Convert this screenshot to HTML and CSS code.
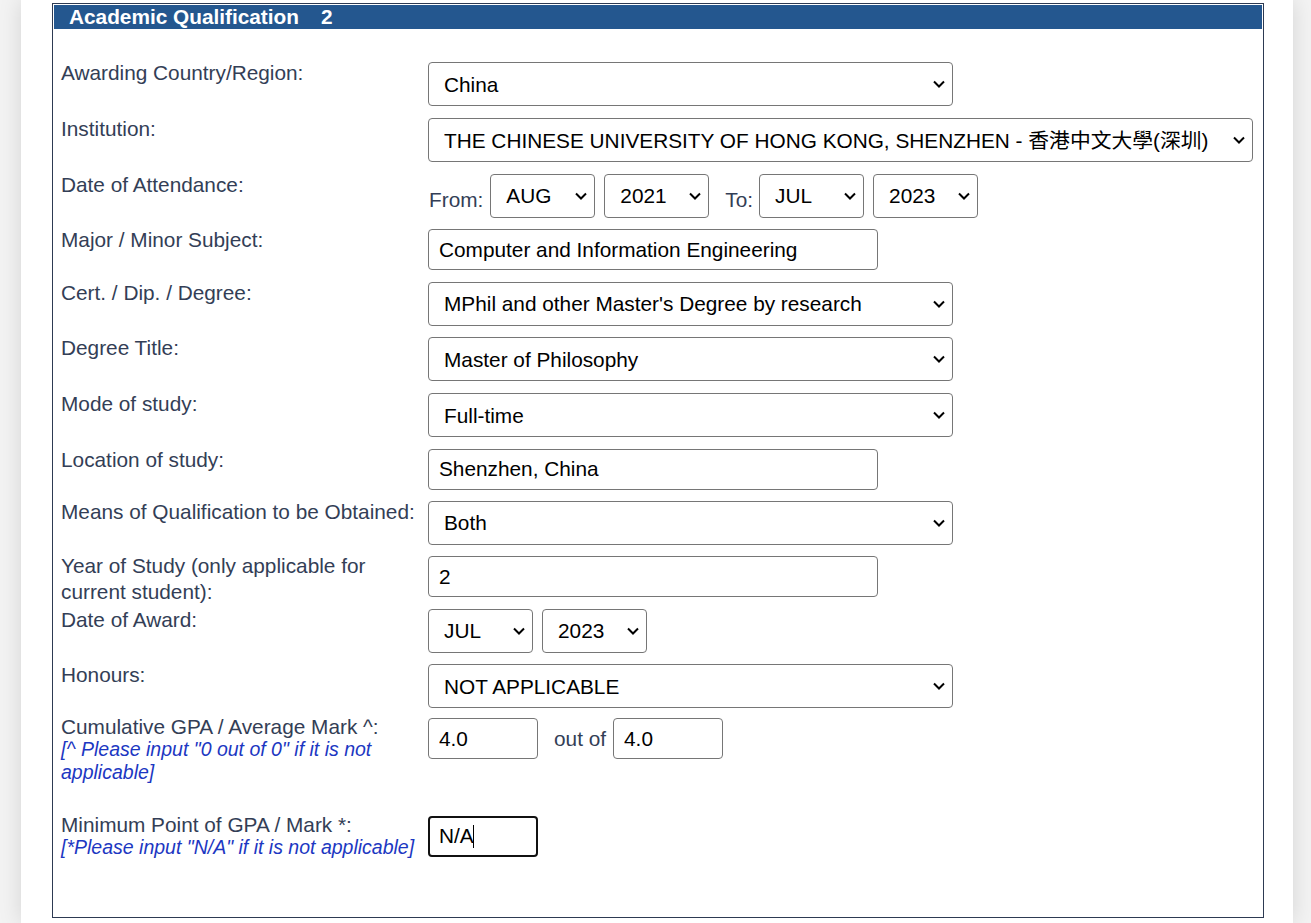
FILE: index.html
```html
<!DOCTYPE html>
<html lang="en">
<head>
<meta charset="utf-8">
<title>Academic Qualification</title>
<link rel="stylesheet" href="styles.css">
</head>
<body>
<div class="page">
  <div class="panel">
    <div class="panel-title">Academic Qualification<span class="num">2</span></div>
    <div class="form">

      <div class="row">
        <div class="label">Awarding Country/Region:</div>
        <div class="field">
          <span class="sel w-md"><select><option>China</option></select><svg class="chev" viewBox="0 0 12 8"><path d="M1 1.5 6 6.5 11 1.5"/></svg></span>
        </div>
      </div>

      <div class="row">
        <div class="label">Institution:</div>
        <div class="field">
          <span class="sel w-xl"><select><option>THE CHINESE UNIVERSITY OF HONG KONG, SHENZHEN - 香港中文大學(深圳)</option></select><svg class="chev" viewBox="0 0 12 8"><path d="M1 1.5 6 6.5 11 1.5"/></svg></span>
        </div>
      </div>

      <div class="row">
        <div class="label">Date of Attendance:</div>
        <div class="field inline">
          <span class="txt from">From:</span>
          <span class="sel w-sm"><select><option>AUG</option></select><svg class="chev" viewBox="0 0 12 8"><path d="M1 1.5 6 6.5 11 1.5"/></svg></span>
          <span class="sel w-sm gap-sel"><select><option>2021</option></select><svg class="chev" viewBox="0 0 12 8"><path d="M1 1.5 6 6.5 11 1.5"/></svg></span>
          <span class="txt to">To:</span>
          <span class="sel w-sm"><select><option>JUL</option></select><svg class="chev" viewBox="0 0 12 8"><path d="M1 1.5 6 6.5 11 1.5"/></svg></span>
          <span class="sel w-sm gap-sel"><select><option>2023</option></select><svg class="chev" viewBox="0 0 12 8"><path d="M1 1.5 6 6.5 11 1.5"/></svg></span>
        </div>
      </div>

      <div class="row short">
        <div class="label">Major / Minor Subject:</div>
        <div class="field">
          <input class="text w-in" type="text" value="Computer and Information Engineering">
        </div>
      </div>

      <div class="row">
        <div class="label">Cert. / Dip. / Degree:</div>
        <div class="field">
          <span class="sel w-md"><select><option>MPhil and other Master's Degree by research</option></select><svg class="chev" viewBox="0 0 12 8"><path d="M1 1.5 6 6.5 11 1.5"/></svg></span>
        </div>
      </div>

      <div class="row">
        <div class="label">Degree Title:</div>
        <div class="field">
          <span class="sel w-md"><select><option>Master of Philosophy</option></select><svg class="chev" viewBox="0 0 12 8"><path d="M1 1.5 6 6.5 11 1.5"/></svg></span>
        </div>
      </div>

      <div class="row">
        <div class="label">Mode of study:</div>
        <div class="field">
          <span class="sel w-md"><select><option>Full-time</option></select><svg class="chev" viewBox="0 0 12 8"><path d="M1 1.5 6 6.5 11 1.5"/></svg></span>
        </div>
      </div>

      <div class="row short">
        <div class="label">Location of study:</div>
        <div class="field">
          <input class="text w-in" type="text" value="Shenzhen, China">
        </div>
      </div>

      <div class="row">
        <div class="label">Means of Qualification to be Obtained:</div>
        <div class="field">
          <span class="sel w-md"><select><option>Both</option></select><svg class="chev" viewBox="0 0 12 8"><path d="M1 1.5 6 6.5 11 1.5"/></svg></span>
        </div>
      </div>

      <div class="row short">
        <div class="label two-line">Year of Study (only applicable for current student):</div>
        <div class="field">
          <input class="text w-in" type="text" value="2">
        </div>
      </div>

      <div class="row">
        <div class="label">Date of Award:</div>
        <div class="field inline">
          <span class="sel w-sm"><select><option>JUL</option></select><svg class="chev" viewBox="0 0 12 8"><path d="M1 1.5 6 6.5 11 1.5"/></svg></span>
          <span class="sel w-sm gap-sel"><select><option>2023</option></select><svg class="chev" viewBox="0 0 12 8"><path d="M1 1.5 6 6.5 11 1.5"/></svg></span>
        </div>
      </div>

      <div class="row">
        <div class="label">Honours:</div>
        <div class="field">
          <span class="sel w-md"><select><option>NOT APPLICABLE</option></select><svg class="chev" viewBox="0 0 12 8"><path d="M1 1.5 6 6.5 11 1.5"/></svg></span>
        </div>
      </div>

      <div class="row short gpa">
        <div class="label with-note">Cumulative GPA / Average Mark ^:<span class="note">[^ Please input "0 out of 0" if it is not applicable]</span></div>
        <div class="field centered">
          <input class="text w-xs" type="text" value="4.0">
          <span class="txt outof">out of</span>
          <input class="text w-xs" type="text" value="4.0">
        </div>
      </div>

      <div class="row short spaced">
        <div class="label with-note">Minimum Point of GPA / Mark *:<span class="note">[*Please input "N/A" if it is not applicable]</span></div>
        <div class="field">
          <span class="focus-wrap"><input class="text w-xs focused" type="text" value="N/A"><span class="caret"></span></span>
        </div>
      </div>

    </div>
  </div>
</div>
</body>
</html>
```

FILE: styles.css
```css
html, body {
  margin: 0;
  padding: 0;
}

body {
  background: #f3f3f3;
  font-family: "Liberation Sans", Arial, "Noto Sans CJK TC", sans-serif;
  font-size: 20.8px;
  color: #333e56;
}

.page {
  box-sizing: border-box;
  width: 1272px;
  min-height: 923px;
  margin-left: 21px;
  padding: 3px 0 0 31px;
  background: #ffffff;
  box-shadow: 0 0 22px rgba(0, 0, 0, 0.13);
}

.panel {
  box-sizing: border-box;
  width: 1212px;
  border: 1px solid #2d3a52;
  padding: 1px;
}

.panel-title {
  height: 24px;
  line-height: 24px;
  padding-left: 15px;
  background: #24578f;
  color: #ffffff;
  font-weight: bold;
  font-size: 20.8px;
}

.panel-title .num {
  margin-left: 22px;
}

.form {
  padding: 27.5px 0 52px 7px;
}

.row {
  display: flex;
  align-items: flex-start;
  padding: 5.875px 0;
}

.row.short {
  padding: 5.5px 0;
}

.row.gpa {
  margin-top: -1.75px;
}

.row.spaced {
  margin-top: 21.5px;
}

.label {
  flex: 0 0 367px;
  line-height: 24px;
  margin-top: -1px;
}

.label.two-line {
  line-height: 26px;
  margin-top: -3px;
  margin-bottom: -8px;
}

.label.with-note {
  line-height: 23px;
  margin-top: -3px;
}

.note {
  display: block;
  font-size: 19.5px;
  line-height: 22.5px;
  font-style: italic;
  color: #1c37c2;
}

.field {
  display: flex;
  align-items: flex-start;
}

.field.inline {
  align-items: flex-end;
}

.field.centered {
  align-items: center;
}

.txt {
  line-height: 24px;
  color: #333e56;
}

.field.inline .txt {
  margin-bottom: 6px;
}

.txt.from {
  margin-left: 1px;
  margin-right: 7px;
}

.txt.to {
  margin-left: 16px;
  margin-right: 6px;
}

.txt.outof {
  margin-left: 16px;
  margin-right: 7px;
}

.sel {
  position: relative;
  display: inline-block;
  flex: none;
}

.sel.gap-sel {
  margin-left: 9px;
}

.sel select {
  -webkit-appearance: none;
  appearance: none;
  box-sizing: border-box;
  width: 100%;
  height: 44px;
  margin: 0;
  padding: 0 34px 0 15px;
  border: 1px solid #767676;
  border-radius: 4px;
  background: #ffffff;
  color: #000000;
  font-family: "Liberation Sans", Arial, "Noto Sans CJK TC", sans-serif;
  font-size: 20.8px;
  display: block;
}

.sel .chev {
  position: absolute;
  right: 8px;
  top: 50%;
  width: 12px;
  height: 8px;
  margin-top: -4px;
  fill: none;
  stroke: #000000;
  stroke-width: 2;
  pointer-events: none;
}

.w-md { width: 525px; }
.w-xl { width: 825px; }
.w-sm { width: 105px; }

.text {
  box-sizing: border-box;
  height: 41px;
  margin: 0;
  padding: 0 10px;
  border: 1px solid #767676;
  border-radius: 4px;
  background: #ffffff;
  color: #000000;
  font-family: "Liberation Sans", Arial, sans-serif;
  font-size: 20.8px;
  outline: none;
}

.w-in { width: 450px; }
.w-xs { width: 110px; }

.focus-wrap {
  position: relative;
  display: inline-block;
}

.text.focused {
  border: 2px solid #111111;
  padding: 0 9px;
}

.caret {
  position: absolute;
  left: 45px;
  top: 9px;
  width: 1px;
  height: 23px;
  background: #000000;
}
```
